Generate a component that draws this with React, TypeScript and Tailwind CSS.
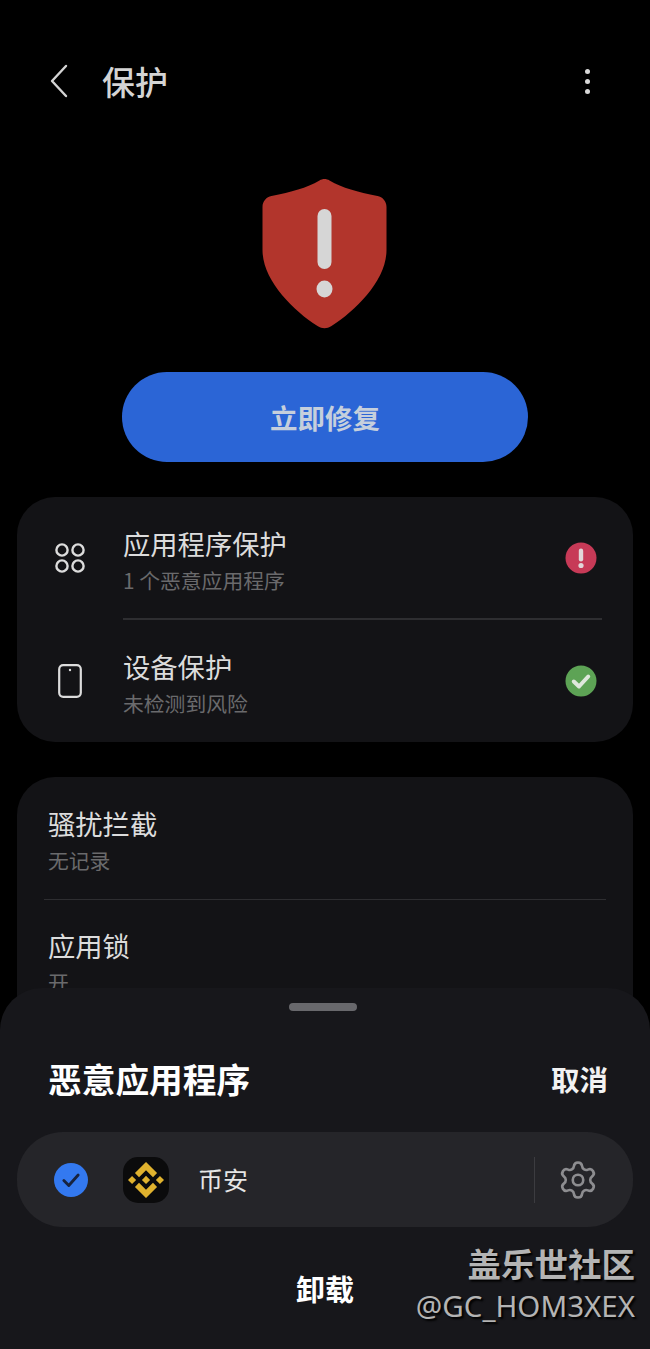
import { Settings } from "lucide-react";

const font = { fontFamily: '"Noto Sans CJK SC", "Noto Sans", sans-serif' };

function BinanceLogo() {
    return (
        <svg width="36" height="36" viewBox="0 0 126.61 126.61" fill="#e0b22e">
            <path d="M38.73 53.2l24.59-24.58 24.6 24.6 14.3-14.31L63.32 0 24.43 38.89z" />
            <path d="M0 63.31l14.3-14.31 14.31 14.31-14.31 14.3z" />
            <path d="M38.73 73.41l24.59 24.59 24.6-24.6 14.31 14.29-38.9 38.91-38.9-38.88z" />
            <path d="M98 63.31l14.3-14.31 14.31 14.31-14.31 14.3z" />
            <path d="M77.83 63.3L63.32 48.78 52.59 59.51l-1.24 1.23-2.54 2.54 14.51 14.52 14.51-14.5z" />
        </svg>
    );
}

function ListRow({ title, sub, icon, status, first }: { title: string; sub: string; icon: React.ReactNode; status: React.ReactNode; first?: boolean }) {
    return (
        <div className={first ? "flex h-[121px] items-center" : "flex h-[122px] items-center"}>
            <div className="flex w-[106px] shrink-0 justify-center">{icon}</div>
            <div className="flex-1 pt-[4px]">
                <p className="text-[27.3px] leading-[36px] text-[#dcdcdc]">{title}</p>
                <p className="mt-[4px] text-[20.8px] leading-[30px] text-[#6a6a6c]">{sub}</p>
            </div>
            <div className="mr-[36px]">{status}</div>
        </div>
    );
}

export default function App() {
    return (
        <div style={font} className="relative h-[1349px] w-[650px] overflow-hidden bg-black">
            {/* header */}
            <div className="flex items-center justify-between pl-[48px] pr-[60px] pt-[58px]">
                <div className="flex items-center">
                    <svg width="22" height="36" viewBox="0 0 22 36" fill="none" stroke="#d4d4d4" strokeWidth="2.4" strokeLinecap="round" strokeLinejoin="round">
                        <path d="M18 3 L4 18 L18 33" />
                    </svg>
                    <h1 className="ml-[32px] text-[33px] font-medium leading-[46px] text-[#d4d4d4]">保护</h1>
                </div>
                <div className="flex flex-col gap-[5px]">
                    <div className="h-[5px] w-[5px] rounded-full bg-[#d8d8d8]" />
                    <div className="h-[5px] w-[5px] rounded-full bg-[#d8d8d8]" />
                    <div className="h-[5px] w-[5px] rounded-full bg-[#d8d8d8]" />
                </div>
            </div>

            {/* shield */}
            <div className="mt-[74px] flex justify-center pr-[1px]">
                <svg width="125" height="151" viewBox="0 0 124 151">
                    <path
                        d="M57 2.5 C60 0.5 64 0.5 67 2.5 C80 10 95 14 115 18 C120 19 124 23 124 29 L124 72 C124 102 94 132 69 148 C64 151 60 151 55 148 C30 132 0 102 0 72 L0 29 C0 23 4 19 9 18 C29 14 44 10 57 2.5 Z"
                        fill="#b2352c"
                    />
                    <rect x="55" y="31" width="14" height="60" rx="7" fill="#d6d6d6" />
                    <ellipse cx="62" cy="111" rx="8" ry="8.5" fill="#d6d6d6" />
                </svg>
            </div>

            {/* fix button */}
            <div className="mt-[43px] flex justify-center">
                <button className="flex h-[90px] w-[406px] items-center justify-center rounded-full bg-[#2b65d6] pt-[2px] text-[27.5px] font-bold text-[#c6cfdc]">
                    立即修复
                </button>
            </div>

            {/* protection card */}
            <div className="mx-[17px] mt-[35px] h-[245px] rounded-[38px] bg-[#131316]">
                <ListRow
                    first
                    title="应用程序保护"
                    sub="1 个恶意应用程序"
                    icon={
                        <svg width="32" height="32" viewBox="0 0 32 32" fill="none" stroke="#dcdcdc" strokeWidth="2.4">
                            <circle cx="8" cy="8" r="5.6" />
                            <circle cx="24" cy="8" r="5.6" />
                            <circle cx="8" cy="24" r="5.6" />
                            <circle cx="24" cy="24" r="5.6" />
                        </svg>
                    }
                    status={
                        <svg width="32" height="32" viewBox="0 0 32 32">
                            <circle cx="16" cy="16" r="15.5" fill="#c73a57" />
                            <rect x="13.8" y="6.5" width="4.4" height="13" rx="2.2" fill="#e2d6d9" />
                            <circle cx="16" cy="23.5" r="2.6" fill="#e2d6d9" />
                        </svg>
                    }
                />
                <div className="ml-[106px] mr-[31px] h-[2px] bg-[#2e2e31]" />
                <ListRow
                    title="设备保护"
                    sub="未检测到风险"
                    icon={
                        <svg width="24" height="34" viewBox="0 0 24 34" fill="none" stroke="#dcdcdc" strokeWidth="2.2">
                            <rect x="1.2" y="1.2" width="21.6" height="31.6" rx="4" />
                            <circle cx="12" cy="6" r="1.2" fill="#dcdcdc" stroke="none" />
                        </svg>
                    }
                    status={
                        <svg width="32" height="32" viewBox="0 0 32 32">
                            <circle cx="16" cy="16" r="15.5" fill="#5da355" />
                            <path d="M8.8 16.5 L14 21.5 L23.2 11.5" fill="none" stroke="#dfe8dc" strokeWidth="4" strokeLinecap="round" strokeLinejoin="round" />
                        </svg>
                    }
                />
            </div>

            {/* second card, runs under the sheet */}
            <div className="mx-[17px] mt-[35px] h-[300px] rounded-[38px] bg-[#131316]">
                <div className="h-[122px] pl-[31px] pt-[28px]">
                    <p className="text-[27.3px] leading-[36px] text-[#dcdcdc]">骚扰拦截</p>
                    <p className="mt-[4px] text-[20.8px] leading-[30px] text-[#6a6a6c]">无记录</p>
                </div>
                <div className="mx-[27px] h-[1px] bg-[#2e2e31]" />
                <div className="pl-[31px] pt-[27px]">
                    <p className="text-[27.3px] leading-[36px] text-[#dcdcdc]">应用锁</p>
                    <p className="mt-[4px] text-[20.8px] leading-[30px] text-[#6a6a6c]">开</p>
                </div>
            </div>

            {/* bottom sheet */}
            <div className="absolute inset-x-0 bottom-0 h-[361px] rounded-t-[42px] bg-[#17171b]">
                <div className="ml-[289px] mt-[15px] h-[8px] w-[68px] rounded-full bg-[#68686c]" />
                <div className="mt-[46px] flex items-center justify-between pl-[48px] pr-[42px]">
                    <h2 className="text-[33.7px] font-bold leading-[44px] text-white">恶意应用程序</h2>
                    <span className="text-[28.5px] font-bold leading-[44px] text-[#f2f2f2]">取消</span>
                </div>
                <div className="mx-[17px] mt-[31px] flex h-[95px] items-center rounded-[46px] bg-[#252529]">
                    <div className="ml-[37px] flex h-[34px] w-[34px] items-center justify-center rounded-full bg-[#3379f0]">
                        <svg width="22" height="22" viewBox="0 0 20 20" fill="none" stroke="#17233f" strokeWidth="2.6" strokeLinecap="round" strokeLinejoin="round">
                            <path d="M3.5 10.5 L8 15 L16.5 5.5" />
                        </svg>
                    </div>
                    <div className="ml-[35px] flex h-[46px] w-[46px] items-center justify-center rounded-[15px] bg-[#0b0b0c]">
                        <BinanceLogo />
                    </div>
                    <span className="ml-[29px] flex-1 text-[25px] text-[#e6e6e6]">币安</span>
                    <div className="h-[46px] w-[1px] bg-[#3c3c40]" />
                    <Settings className="ml-[22px] mr-[34px] h-[42px] w-[42px] text-[#8d8d90]" strokeWidth={1.5} />
                </div>
                <div className="mt-[36px] text-center text-[29px] font-bold leading-[50px] text-white">卸载</div>
            </div>

            {/* watermark */}
            <div className="absolute bottom-[22px] right-[15px] text-right text-[#b4b4b4] [text-shadow:2px_2px_2px_#000]">
                <p className="text-[33.5px] font-bold leading-[44px]">盖乐世社区</p>
                <p className="text-[29.5px] leading-[42px] [font-family:'Noto_Sans',sans-serif]">@GC_HOM3XEX</p>
            </div>
        </div>
    );
}
